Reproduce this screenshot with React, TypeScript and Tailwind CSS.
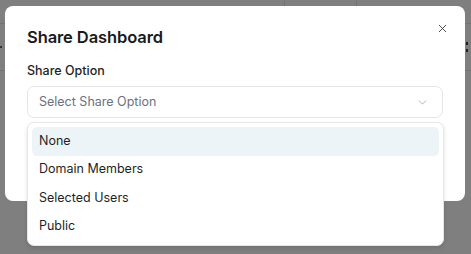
import { X, ChevronDown } from "lucide-react";

const options = ["None", "Domain Members", "Selected Users", "Public"];

function Backdrop() {
  // faint page behind the overlay
  return (
    <div className="absolute inset-0 flex flex-col">
      <div className="h-[24px] flex border-b border-[#737373]">
        <div className="w-[284px]" />
        <div className="w-[73px] border-l border-r border-[#737373]" />
      </div>
      <div className="h-[47px] border-b border-[#737373] flex items-center justify-between">
        <span className="w-[2px] h-[2px] bg-[#333]" />
        <span className="flex flex-col gap-[4px] pr-[3px]">
          <span className="w-[2px] h-[3px] bg-[#222]" />
          <span className="w-[2px] h-[3px] bg-[#222]" />
        </span>
      </div>
    </div>
  );
}

export default function App() {
  return (
    <div
      className="relative w-[471px] h-[254px] overflow-hidden bg-[#7f7f7f]"
      style={{ fontFamily: "Inter, 'Liberation Sans', sans-serif" }}
    >
      <Backdrop />

      <div className="absolute left-[5px] top-[6px] w-[460px] h-[195px] rounded-[8px] bg-white px-[22px] pt-[21px]">
        <button className="absolute right-[16px] top-[16px] text-[#3f3f3f]">
          <X size={13} strokeWidth={1.7} />
        </button>
        <h2 className="text-[16.5px] leading-[20px] font-semibold text-[#1a1a1a] tracking-[-0.1px]">
          Share Dashboard
        </h2>
        <label className="block mt-[16px] text-[12.5px] leading-[16px] font-medium text-[#1f1f1f]">
          Share Option
        </label>
        <div className="mt-[7px] h-[32px] rounded-[7px] border border-[#e5e7eb] flex items-center justify-between pl-[11px] pr-[13px]">
          <span className="text-[12.5px] text-[#6b7280]">Select Share Option</span>
          <ChevronDown size={13} strokeWidth={1.5} className="text-[#9ca3af]" />
        </div>
      </div>

      <div className="absolute left-[27px] top-[122px] w-[417px] rounded-[7px] border border-[#e5e7eb] bg-white p-[4px] shadow-[0_2px_4px_rgba(0,0,0,0.12)]">
        {options.map((o, i) => (
          <div
            key={o}
            className={
              "h-[28.5px] flex items-center px-[7px] rounded-[5px] text-[12.5px] text-[#1f1f1f] " +
              (i === 0 ? "bg-[#edf4f8]" : "")
            }
          >
            {o}
          </div>
        ))}
      </div>
    </div>
  );
}
